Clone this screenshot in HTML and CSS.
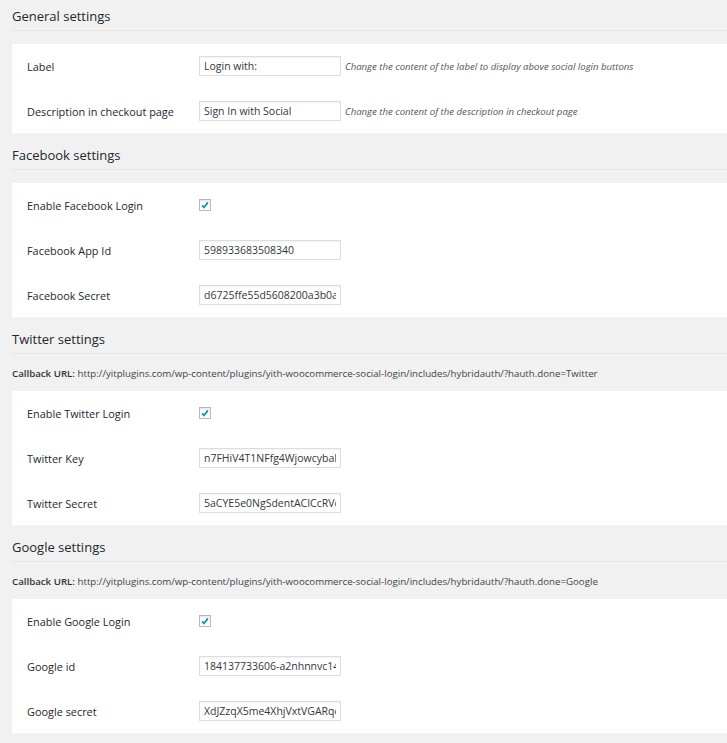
FILE: index.html
```html
<!DOCTYPE html>
<html>
<head>
<meta charset="utf-8">
<link rel="stylesheet" href="styles.css">
</head>
<body>
<div class="wrap">
  <section class="section">
    <h2 class="title">General settings</h2>
    <div class="card">
      <div class="row">
        <div class="label">Label</div>
        <input class="field" type="text" value="Login with:">
        <span class="help">Change the content of the label to display above social login buttons</span>
      </div>
      <div class="row">
        <div class="label">Description in checkout page</div>
        <input class="field" type="text" value="Sign In with Social">
        <span class="help">Change the content of the description in checkout page</span>
      </div>
    </div>
  </section>

  <section class="section">
    <h2 class="title">Facebook settings</h2>
    <div class="card">
      <div class="row">
        <div class="label">Enable Facebook Login</div>
        <span class="check"><svg viewBox="0 0 12 12" width="12" height="12"><path d="M3 6.3 L5 8.3 L9 3.4" fill="none" stroke="#1e8cbe" stroke-width="1.8"/></svg></span>
      </div>
      <div class="row">
        <div class="label">Facebook App Id</div>
        <input class="field" type="text" value="598933683508340">
      </div>
      <div class="row">
        <div class="label">Facebook Secret</div>
        <input class="field" type="text" value="d6725ffe55d5608200a3b0a4c1f2e">
      </div>
    </div>
  </section>

  <section class="section">
    <h2 class="title">Twitter settings</h2>
    <p class="callback"><b>Callback URL:</b> http://yitplugins.com/wp-content/plugins/yith-woocommerce-social-login/includes/hybridauth/?hauth.done=Twitter</p>
    <div class="card">
      <div class="row">
        <div class="label">Enable Twitter Login</div>
        <span class="check"><svg viewBox="0 0 12 12" width="12" height="12"><path d="M3 6.3 L5 8.3 L9 3.4" fill="none" stroke="#1e8cbe" stroke-width="1.8"/></svg></span>
      </div>
      <div class="row">
        <div class="label">Twitter Key</div>
        <input class="field" type="text" value="n7FHiV4T1NFfg4WjowcybaIkq">
      </div>
      <div class="row">
        <div class="label">Twitter Secret</div>
        <input class="field" type="text" value="5aCYE5e0NgSdentACICcRVdk2">
      </div>
    </div>
  </section>

  <section class="section">
    <h2 class="title">Google settings</h2>
    <p class="callback"><b>Callback URL:</b> http://yitplugins.com/wp-content/plugins/yith-woocommerce-social-login/includes/hybridauth/?hauth.done=Google</p>
    <div class="card">
      <div class="row">
        <div class="label">Enable Google Login</div>
        <span class="check"><svg viewBox="0 0 12 12" width="12" height="12"><path d="M3 6.3 L5 8.3 L9 3.4" fill="none" stroke="#1e8cbe" stroke-width="1.8"/></svg></span>
      </div>
      <div class="row">
        <div class="label">Google id</div>
        <input class="field" type="text" value="184137733606-a2nhnnvc14k">
      </div>
      <div class="row">
        <div class="label">Google secret</div>
        <input class="field" type="text" value="XdJZzqX5me4XhjVxtVGARqe1">
      </div>
    </div>
  </section>
</div>
</body>
</html>
```

FILE: styles.css
```css
html, body {
  margin: 0;
  padding: 0;
  background: #f1f1f1;
}
body {
  font-family: "Open Sans", "Liberation Sans", sans-serif;
  color: #23282d;
}
.wrap {
  padding-left: 12px;
}
.section + .section {
  margin-top: 6px;
}
.title {
  margin: 0;
  padding: 6px 0 4px;
  font-size: 13px;
  line-height: 20px;
  font-weight: 400;
  color: #23282d;
  border-bottom: 1px solid #e6e6e6;
}
.callback {
  margin: 10px 0 7px;
  font-size: 9.7px;
  line-height: 20px;
  color: #444;
}
.callback b {
  font-weight: 600;
  color: #333;
}
.title + .card {
  margin-top: 13px;
}
.card {
  display: flex;
  flex-direction: column;
  gap: 1px;
  background: #fff;
  padding-left: 15px;
}
.row {
  display: flex;
  align-items: center;
  height: 44px;
}
.label {
  width: 172px;
  flex: none;
  font-size: 10.9px;
  color: #23282d;
}
.field {
  flex: none;
  box-sizing: border-box;
  width: 142px;
  height: 20px;
  margin: 0;
  padding: 0 4px;
  border: 1px solid #dddddd;
  background: #fff;
  font-family: "Open Sans", "Liberation Sans", sans-serif;
  font-size: 10.5px;
  color: #32373c;
  box-shadow: inset 0 1px 2px rgba(0,0,0,0.05);
  outline: none;
}
.help {
  margin-left: 4px;
  font-size: 9.6px;
  font-style: italic;
  color: #555;
}
.check {
  flex: none;
  display: flex;
  box-sizing: border-box;
  width: 12px;
  height: 12px;
  border: 1px solid #b4b9be;
  background: #fff;
  box-shadow: inset 0 1px 2px rgba(0,0,0,0.1);
}
.check svg {
  margin: -1px;
}
```
